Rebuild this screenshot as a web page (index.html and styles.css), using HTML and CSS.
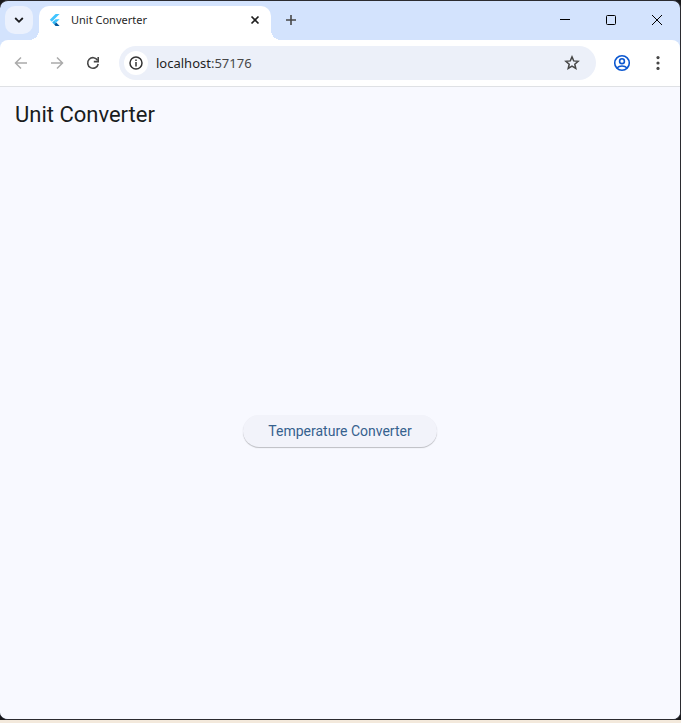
FILE: index.html
```html
<!DOCTYPE html>
<html lang="en">
<head>
<meta charset="utf-8">
<title>Unit Converter</title>
<link rel="stylesheet" href="styles.css">
</head>
<body>
<div class="window">
  <header class="tab-strip">
    <button class="tab-search" aria-label="Search tabs">
      <svg width="10" height="8" viewBox="0 0 10 8" fill="none" stroke="#1b1c1f" stroke-width="1.8"><path d="M1.2 2l3.8 3.8L8.8 2"/></svg>
    </button>
    <div class="tab">
      <svg class="favicon" width="16" height="16" viewBox="0 0 16 16">
        <path fill="#40c4ff" d="M8.6 2h4L4.8 9.8l-2-2z"/>
        <path fill="#40c4ff" d="M8.6 7.2h4L9.2 10.6l-2-2z"/>
        <path fill="#29b6f6" d="M5.2 10.6l2-2 2 2-2 2z"/>
        <path fill="#01579b" d="M7.2 12.6l2-2 3.4 3.4h-4z"/>
      </svg>
      <span class="tab-title">Unit Converter</span>
      <button class="tab-close" aria-label="Close tab">
        <svg width="10" height="10" viewBox="0 0 10 10" stroke="#1f1f1f" stroke-width="1.7"><path d="M1.5 1.5l7 7M8.5 1.5l-7 7"/></svg>
      </button>
    </div>
    <button class="new-tab" aria-label="New tab">
      <svg width="12" height="12" viewBox="0 0 12 12" stroke="#474747" stroke-width="1.6"><path d="M6 1v10M1 6h10"/></svg>
    </button>
    <div class="window-controls">
      <button aria-label="Minimize"><svg width="12" height="12" viewBox="0 0 12 12" stroke="#000"><path d="M1 5.5h10"/></svg></button>
      <button aria-label="Maximize"><svg width="12" height="12" viewBox="0 0 12 12" fill="none" stroke="#000"><rect x="1.5" y="1.5" width="9" height="9" rx="1"/></svg></button>
      <button aria-label="Close"><svg width="12" height="12" viewBox="0 0 12 12" stroke="#000"><path d="M1 1l10 10M11 1L1 11"/></svg></button>
    </div>
  </header>
  <nav class="toolbar">
    <button class="tool" aria-label="Back" disabled>
      <svg width="14" height="14" viewBox="0 0 14 14" fill="none" stroke="#ababab" stroke-width="1.5"><path d="M13 7H2M7 1.5L1.5 7 7 12.5"/></svg>
    </button>
    <button class="tool" aria-label="Forward" disabled>
      <svg width="14" height="14" viewBox="0 0 14 14" fill="none" stroke="#ababab" stroke-width="1.5"><path d="M1 7h11M7 1.5L12.5 7 7 12.5"/></svg>
    </button>
    <button class="tool" aria-label="Reload">
      <svg width="14" height="14" viewBox="0 0 14 14" fill="none" stroke="#474747" stroke-width="1.6"><path d="M12.2 8A5.3 5.3 0 1 1 11.6 4.3"/><path d="M12.2 1v4.6H7.8"/></svg>
    </button>
    <div class="address-bar">
      <button class="site-info" aria-label="View site information">
        <svg width="14" height="14" viewBox="0 0 14 14" fill="none" stroke="#333" stroke-width="1.5"><circle cx="7" cy="7" r="6"/><path d="M7 6v4.4M7 3.6v1.5"/></svg>
      </button>
      <a class="url" href="#"><span class="host">localhost</span>:57176</a>
      <button class="bookmark" aria-label="Bookmark this tab">
        <svg width="16" height="16" viewBox="0 0 16 16" fill="none" stroke="#474747" stroke-width="1.5"><path d="M8 1.9l1.7 4 4.4.4-3.3 2.9 1 4.3L8 11.2l-3.8 2.3 1-4.3-3.3-2.9 4.4-.4z"/></svg>
      </button>
    </div>
    <button class="tool" aria-label="Profile">
      <svg width="18" height="18" viewBox="0 0 18 18" fill="none" stroke="#0b57d0" stroke-width="1.6"><circle cx="9" cy="9" r="7.3"/><circle cx="9" cy="7.2" r="2.4"/><path d="M3.8 14c2.8-2.6 7.6-2.6 10.4 0"/></svg>
    </button>
    <button class="tool" aria-label="Menu">
      <svg width="4" height="16" viewBox="0 0 4 16" fill="#474747"><circle cx="2" cy="2.6" r="1.6"/><circle cx="2" cy="8" r="1.6"/><circle cx="2" cy="13.4" r="1.6"/></svg>
    </button>
  </nav>
  <main class="page">
    <h1 class="page-title">Unit Converter</h1>
    <div class="page-body">
      <button class="elevated-button">Temperature Converter</button>
    </div>
  </main>
</div>
</body>
</html>
```
FILE: styles.css
```css
* {
  box-sizing: border-box;
}

body {
  margin: 0;
  height: 100vh;
  padding-bottom: 3px;
  background: linear-gradient(#18181b, #18181b) top / 100% calc(100% - 3px) no-repeat #f3e9dc;
  font-family: "Noto Sans", "Open Sans", sans-serif;
}

button {
  display: flex;
  align-items: center;
  justify-content: center;
  flex: none;
  margin: 0;
  padding: 0;
  border: 0;
  background: none;
  font: inherit;
}

.window {
  display: flex;
  flex-direction: column;
  height: 100%;
  border: 1px solid #2b2b30;
  border-left: 0;
  border-radius: 8px;
  overflow: hidden;
  background: #d3e3fd;
}

.tab-strip {
  display: flex;
  align-items: flex-start;
  height: 39px;
  padding: 5px 0 0 5px;
}

.tab-search {
  width: 28px;
  height: 28px;
  border-radius: 10px;
  background: #ebf1fd;
}

.tab {
  position: relative;
  display: flex;
  align-items: center;
  width: 232px;
  height: 34px;
  margin-left: 6px;
  padding: 0 6px 6px 8px;
  border-radius: 10px 10px 0 0;
  background: #fff;
}

.tab::before,
.tab::after {
  content: "";
  position: absolute;
  bottom: 0;
  width: 10px;
  height: 10px;
}

.tab::before {
  right: 100%;
  background: radial-gradient(circle at 0 0, transparent 10px, #fff 10px);
}

.tab::after {
  left: 100%;
  background: radial-gradient(circle at 100% 0, transparent 10px, #fff 10px);
}

.tab-title {
  flex: 1;
  margin-left: 8px;
  font-size: 11px;
  line-height: 16px;
  color: #1f1f1f;
}

.tab-close {
  width: 20px;
  height: 20px;
}

.new-tab {
  width: 28px;
  height: 28px;
  margin-left: 6px;
}

.window-controls {
  display: flex;
  margin-left: auto;
}

.window-controls button {
  width: 46px;
  height: 28px;
}

.toolbar {
  display: flex;
  align-items: center;
  gap: 2px;
  height: 47px;
  padding: 0 5px 0 4px;
  border-bottom: 1px solid #dfe1e5;
  border-radius: 8px 8px 0 0;
  background: #fff;
}

.tool {
  width: 34px;
  height: 34px;
}

.address-bar {
  display: flex;
  align-items: center;
  flex: 1;
  height: 34px;
  margin: 0 7px 0 7px;
  padding: 0 12px 0 5px;
  border-radius: 17px;
  background: #ecf0f9;
}

.site-info {
  width: 24px;
  height: 24px;
  border-radius: 50%;
  background: #fff;
}

.url {
  flex: 1;
  margin-left: 8px;
  font-size: 13px;
  line-height: 18px;
  color: #474747;
  text-decoration: none;
}

.host {
  color: #1f1f1f;
}

.bookmark {
  width: 24px;
  height: 24px;
}

.page {
  display: flex;
  flex-direction: column;
  flex: 1;
  background: #f8f9ff;
  font-family: Roboto, sans-serif;
}

.page-title {
  margin: 0;
  padding: 0 15px;
  font-size: 22px;
  font-weight: 400;
  line-height: 56px;
  color: #191c20;
}

.page-body {
  display: flex;
  flex: 1;
  align-items: center;
  justify-content: center;
}

.elevated-button {
  height: 32px;
  padding: 0 25px;
  border-radius: 16px;
  background: #f2f3fa;
  box-shadow: 0 1px 1px rgba(0, 0, 0, 0.24);
  font-size: 14px;
  line-height: 20px;
  color: #36618e;
}
```
